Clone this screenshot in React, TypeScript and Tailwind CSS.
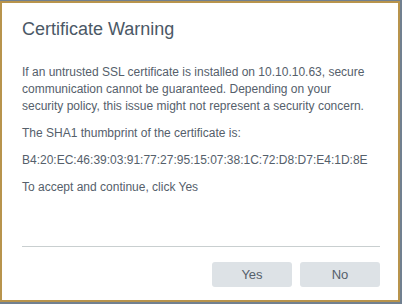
import React from "react";

const App: React.FC = () => {
  return (
    <div className="w-[402px] h-[304px] bg-[#718090] pt-px overflow-hidden">
      {/* Dialog */}
      <div
        className="w-[400px] h-[301px] bg-white border-2 border-[#b8944c] flex flex-col pl-5 pr-[18px] text-[#55606b]"
        style={{ fontFamily: '"Liberation Sans", Arial, sans-serif' }}
      >
        <h1 className="text-[18px] leading-[22px] text-[#4b5866] mt-[15px]">Certificate Warning</h1>

        {/* Body */}
        <div className="mt-[24px] text-[12px] leading-[17px] flex flex-col gap-[10px]">
          <p>
            If an untrusted SSL certificate is installed on 10.10.10.63, secure
            <br />
            communication cannot be guaranteed. Depending on your
            <br />
            security policy, this issue might not represent a security concern.
          </p>
          <p>The SHA1 thumbprint of the certificate is:</p>
          <p>B4:20:EC:46:39:03:91:77:27:95:15:07:38:1C:72:D8:D7:E4:1D:8E</p>
          <p>To accept and continue, click Yes</p>
        </div>

        {/* Footer */}
        <div className="mt-auto mb-[13px]">
          <div className="h-px bg-[#c9cfd0]" />
          <div className="flex justify-end gap-2 mt-[15px]">
            <button className="w-[80px] h-[25px] rounded-[3px] bg-[#dde2e6] text-[13px] text-[#55606b]">
              Yes
            </button>
            <button className="w-[80px] h-[25px] rounded-[3px] bg-[#dde2e6] text-[13px] text-[#55606b]">
              No
            </button>
          </div>
        </div>
      </div>
    </div>
  );
};

export default App;
